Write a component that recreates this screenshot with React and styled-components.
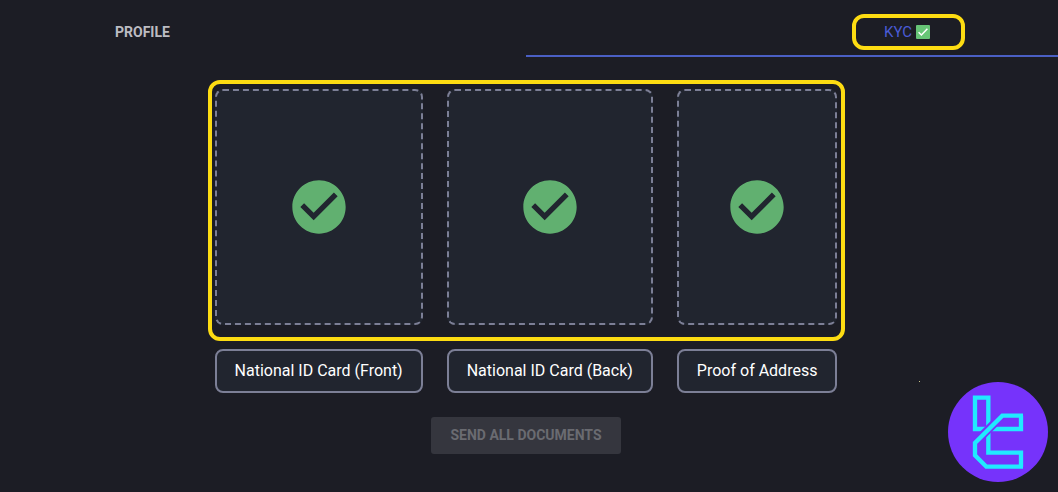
import React, { useState } from "react";
import styled, { createGlobalStyle } from "styled-components";

const documents = ["National ID Card (Front)", "National ID Card (Back)", "Proof of Address"];

const App = () => {
  // Active tab state
  const [active, setActive] = useState("kyc");
  return (
    <>
      <GlobalStyle />
      <Tabs role="tablist">
        <Tab
          role="tab"
          aria-selected={active === "profile"}
          $active={active === "profile"}
          onClick={() => setActive("profile")}
        >
          PROFILE
        </Tab>
        <Tab
          role="tab"
          aria-selected={active === "kyc"}
          $active={active === "kyc"}
          $end
          onClick={() => setActive("kyc")}
        >
          <TabHighlight>
            KYC
            <VerifiedIcon />
          </TabHighlight>
        </Tab>
      </Tabs>

      <Content>
        <DocumentGrid>
          {documents.map((name) => (
            <DropZone key={name}>
              <DoneIcon />
            </DropZone>
          ))}
          {documents.map((name) => (
            <DocumentButton key={name} type="button">
              {name}
            </DocumentButton>
          ))}
          <GridHighlight />
        </DocumentGrid>
        <SendButton type="button" disabled>
          SEND ALL DOCUMENTS
        </SendButton>
      </Content>

      <Speck />
      <Logo />
    </>
  );
};

const VerifiedIcon = () => (
  <svg width="14" height="14" viewBox="0 0 14 14" aria-hidden="true">
    <rect width="14" height="14" rx="1" fill="#67c577" />
    <path d="M2.6 7.3 5.4 10 11.4 3.8" fill="none" stroke="#fff" strokeWidth="1.5" />
  </svg>
);

const DoneIcon = () => (
  <svg width="64" height="64" viewBox="0 0 24 24" aria-hidden="true">
    <path
      fill="#61b070"
      d="M12 2C6.48 2 2 6.48 2 12s4.48 10 10 10 10-4.480 10-10S17.520 2 12 2zm-2 15l-5-5 1.410-1.410L10 14.170l7.590-7.590L19 8l-9 9z"
    />
  </svg>
);

const Logo = () => (
  <LogoSvg viewBox="0 0 300 300" aria-hidden="true">
    <circle cx="150" cy="150" r="150" fill="#7633fb" />
    <g fill="none" stroke="#20eaff" strokeWidth="13">
      <path d="M219 101V141H81V47H121V212H219V254" />
      {/* gap on both sides of the diagonal */}
      <path d="M158 105L86 177" stroke="#7633fb" strokeWidth="25" />
      <path d="M225 101H163L81 183V220L115 254H225" />
    </g>
  </LogoSvg>
);

const GlobalStyle = createGlobalStyle`
  * {
    box-sizing: border-box;
  }
  body {
    margin: 0;
    background: #1c1d25;
    color: #ffffff;
    font-family: Roboto, "Liberation Sans", sans-serif;
  }
  button {
    font-family: inherit;
  }
`;

const Tabs = styled.div`
  display: grid;
  grid-template-columns: 526fr 532fr;
`;

const Tab = styled.button`
  display: flex;
  align-items: center;
  justify-content: ${(props) => (props.$end ? "flex-end" : "flex-start")};
  padding: ${(props) => (props.$end ? "14px 93px 5px 0" : "14px 0 5px 115px")};
  border: none;
  border-bottom: 2px solid ${(props) => (props.$active ? "#4a5fc4" : "transparent")};
  background: none;
  color: ${(props) => (props.$active ? "#4a5bd6" : "#bcbcc2")};
  font-size: ${(props) => (props.$active ? "15px" : "14px")};
  font-weight: ${(props) => (props.$active ? 400 : 700)};
  cursor: pointer;
`;

const TabHighlight = styled.span`
  display: flex;
  align-items: center;
  gap: 4px;
  height: 36px;
  padding: 0 31px 0 28px;
  border: 4px solid #fddc12;
  border-radius: 12px;
`;

const Content = styled.main`
  display: flex;
  flex-direction: column;
  align-items: center;
  gap: 24px;
  padding: 32px 6px 38px 0;
`;

const DocumentGrid = styled.div`
  position: relative;
  display: grid;
  grid-template-columns: repeat(3, auto);
  gap: 24px;
`;

const DropZone = styled.div`
  display: flex;
  align-items: center;
  justify-content: center;
  height: 236px;
  border: 2px dashed #7c7f96;
  border-radius: 8px;
  background: #21252f;
`;

const DocumentButton = styled.button`
  height: 44px;
  padding: 0 18px 2px;
  border: 2px solid #7c7f96;
  border-radius: 8px;
  background: #21252f;
  color: #ffffff;
  font-size: 16px;
  cursor: pointer;
`;

// Drawn over the first row of the grid
const GridHighlight = styled.div`
  position: absolute;
  inset: -9px -8px -16px -7px;
  grid-row: 1 / 2;
  grid-column: 1 / -1;
  border: 4px solid #fddc12;
  border-radius: 12px;
  pointer-events: none;
`;

const SendButton = styled.button`
  height: 37px;
  padding: 0 19px 2px;
  border: none;
  border-radius: 3px;
  background: #35363e;
  color: #6a6b71;
  font-size: 14px;
  font-weight: 700;
`;

const Speck = styled.span`
  position: fixed;
  right: 138px;
  bottom: 110px;
  width: 1px;
  height: 1px;
  background: #c9c48a;
`;

const LogoSvg = styled.svg`
  position: fixed;
  right: 10px;
  bottom: 10px;
  width: 100px;
  height: 100px;
`;

export default App;
